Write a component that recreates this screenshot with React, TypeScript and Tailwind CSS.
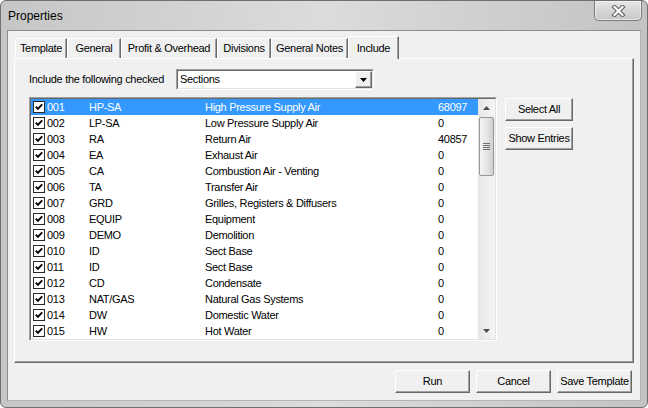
import React from "react";

const rows: [string, string, string, string][] = [
  ["001", "HP-SA", "High Pressure Supply Air", "68097"],
  ["002", "LP-SA", "Low Pressure Supply Air", "0"],
  ["003", "RA", "Return Air", "40857"],
  ["004", "EA", "Exhaust Air", "0"],
  ["005", "CA", "Combustion Air - Venting", "0"],
  ["006", "TA", "Transfer Air", "0"],
  ["007", "GRD", "Grilles, Registers & Diffusers", "0"],
  ["008", "EQUIP", "Equipment", "0"],
  ["009", "DEMO", "Demolition", "0"],
  ["010", "ID", "Sect Base", "0"],
  ["011", "ID", "Sect Base", "0"],
  ["012", "CD", "Condensate", "0"],
  ["013", "NAT/GAS", "Natural Gas Systems", "0"],
  ["014", "DW", "Domestic Water", "0"],
  ["015", "HW", "Hot Water", "0"],
];

function Check() {
  return (
    <svg width="12" height="12" viewBox="0 0 12 12" className="block">
      <rect x="0.5" y="0.5" width="11" height="11" fill="#fff" stroke="#2a2a2a" />
      <path d="M2.8 5.6 L4.9 7.8 L9.2 3.4" fill="none" stroke="#000" strokeWidth="1.9" />
    </svg>
  );
}

function Btn({ children, className }: { children: React.ReactNode; className: string }) {
  return (
    <div
      className={
        "flex items-center justify-center bg-[#f0f0f0] border border-t-white border-l-white border-r-[#696969] border-b-[#696969] shadow-[inset_-1px_-1px_0_#a0a0a0] " +
        className
      }
    >
      {children}
    </div>
  );
}

function Tab({ label, w, selected }: { label: string; w: string; selected?: boolean }) {
  if (selected) {
    return (
      <div
        className={
          "relative z-10 h-[23px] -mb-[1px] flex items-start justify-center pt-[3px] bg-[#f0f0f0] border-t border-l border-white border-r border-r-[#696969] shadow-[inset_-1px_0_0_#a0a0a0] rounded-tl-[2px] " +
          w
        }
      >
        {label}
      </div>
    );
  }
  return (
    <div
      className={
        "h-[20px] flex items-center justify-center bg-[#f0f0f0] border-t border-l border-white border-r border-r-[#696969] shadow-[inset_-1px_0_0_#a0a0a0] rounded-tl-[2px] " +
        w
      }
    >
      {label}
    </div>
  );
}

export default function App() {
  return (
    <div
      className="w-[648px] h-[408px] flex flex-col rounded-[6px] border border-[#6f6f6f] bg-linear-to-r from-[#c6c6c6] via-[#dcdcdc] to-[#c3c3c3] relative overflow-hidden text-black tracking-[-0.3px]"
      style={{ fontFamily: '"Liberation Sans", Arial, sans-serif' }}
    >
      {/* Title bar */}
      <div className="h-[29px] flex items-center pl-[7px] text-[12px] tracking-normal">Properties</div>
      <div className="absolute top-0 right-[5px] w-[48px] h-[20px] rounded-b-[5px] border border-t-0 border-[#7c7c7c] bg-linear-to-b from-[#e6e6e6] to-[#c8c8c8] shadow-[inset_0_0_0_1px_rgba(255,255,255,0.55)] flex items-center justify-center">
        <svg width="15" height="12" viewBox="0 0 15 12">
          <path d="M3.5 2 L11.5 10 M11.5 2 L3.5 10" stroke="#5f5f5f" strokeWidth="4.2" strokeLinecap="square" />
          <path d="M3.5 2 L11.5 10 M11.5 2 L3.5 10" stroke="#ffffff" strokeWidth="2.2" strokeLinecap="square" />
        </svg>
      </div>

      {/* Client area */}
      <div className="mx-[6px] h-[371px] border border-t-[#8d8d8d] border-l-[#8d8d8d] border-r-[#b5b5b5] border-b-[#b5b5b5] bg-[#f0f0f0] flex flex-col text-[11px]">
        {/* Tabs */}
        <div className="mt-[5px] ml-[7px] h-[22px] flex items-end">
          <Tab label="Template" w="w-[52px]" />
          <Tab label="General" w="w-[54px]" />
          <Tab label="Profit & Overhead" w="w-[96px]" />
          <Tab label="Divisions" w="w-[54px]" />
          <Tab label="General Notes" w="w-[77px]" />
          <Tab label="Include" w="w-[51px]" selected />
        </div>

        {/* Panel */}
        <div className="mx-[6px] h-[305px] border-t border-l border-white border-r border-b border-r-[#696969] border-b-[#696969] shadow-[inset_-1px_-1px_0_#a0a0a0] pt-[10px] pl-[14px]">
          <div className="flex items-center h-[21px]">
            <div className="w-[147px]">Include the following checked</div>
            <div className="w-[198px] h-[21px] border border-t-[#a0a0a0] border-l-[#a0a0a0] border-r-white border-b-white">
              <div className="h-full border border-t-[#696969] border-l-[#696969] border-r-[#e3e3e3] border-b-[#e3e3e3] bg-white flex items-center">
                <div className="flex-1 pl-[2px]">Sections</div>
                <Btn className="w-[17px] h-[17px] shrink-0">
                  <svg width="7" height="4" viewBox="0 0 7 4">
                    <path d="M0 0 H7 L3.5 4 Z" fill="#000" />
                  </svg>
                </Btn>
              </div>
            </div>
          </div>

          <div className="mt-[7px] flex items-start">
            {/* List */}
            <div className="w-[468px] h-[244px] border border-t-[#a0a0a0] border-l-[#a0a0a0] border-r-white border-b-white">
              <div className="h-full border border-t-[#696969] border-l-[#696969] border-r-[#e3e3e3] border-b-[#e3e3e3] bg-white flex">
                <div className="flex-1 flex flex-col">
                  {rows.map((r, i) => (
                    <div
                      key={r[0]}
                      className={
                        i === 0
                          ? "h-[16px] flex items-center bg-[#3399ff] text-white"
                          : "h-[16px] flex items-center"
                      }
                    >
                      <div className="w-[16px] pl-[2px] shrink-0">
                        <Check />
                      </div>
                      <div className="w-[42px] shrink-0">{r[0]}</div>
                      <div className="w-[116px] shrink-0">{r[1]}</div>
                      <div className="w-[233px] shrink-0 whitespace-nowrap">{r[2]}</div>
                      <div className="flex-1">{r[3]}</div>
                    </div>
                  ))}
                </div>
                {/* Scrollbar */}
                <div className="w-[17px] flex flex-col bg-linear-to-r from-[#e6e6e6] to-[#f5f5f5]">
                  <div className="h-[17px] flex items-center justify-center">
                    <svg width="7" height="4" viewBox="0 0 7 4">
                      <path d="M3.5 0 L7 4 H0 Z" fill="#4d4d4d" />
                    </svg>
                  </div>
                  <div className="flex-1">
                    <div className="mt-[1px] mx-[1px] h-[59px] rounded-[2px] border border-[#979797] bg-linear-to-r from-[#f4f4f4] via-[#e6e6e6] to-[#cfcfcf] flex flex-col items-center justify-center gap-[1px]">
                      <div className="w-[7px] h-[1px] bg-[#6e6e6e]" />
                      <div className="w-[7px] h-[1px] bg-[#6e6e6e]" />
                      <div className="w-[7px] h-[1px] bg-[#6e6e6e]" />
                      <div className="w-[7px] h-[1px] bg-[#6e6e6e]" />
                    </div>
                  </div>
                  <div className="h-[17px] flex items-center justify-center">
                    <svg width="7" height="4" viewBox="0 0 7 4">
                      <path d="M0 0 H7 L3.5 4 Z" fill="#4d4d4d" />
                    </svg>
                  </div>
                </div>
              </div>
            </div>

            {/* Side buttons */}
            <div className="ml-[8px] flex flex-col">
              <Btn className="mt-[1px] w-[68px] h-[23px]">Select All</Btn>
              <Btn className="mt-[6px] w-[68px] h-[23px]">Show Entries</Btn>
            </div>
          </div>
        </div>

        {/* Bottom buttons */}
        <div className="mt-[7px] pr-[8px] flex justify-end gap-[6px]">
          <Btn className="w-[75px] h-[23px]">Run</Btn>
          <Btn className="w-[75px] h-[23px]">Cancel</Btn>
          <Btn className="w-[75px] h-[23px]">Save Template</Btn>
        </div>
      </div>
    </div>
  );
}
